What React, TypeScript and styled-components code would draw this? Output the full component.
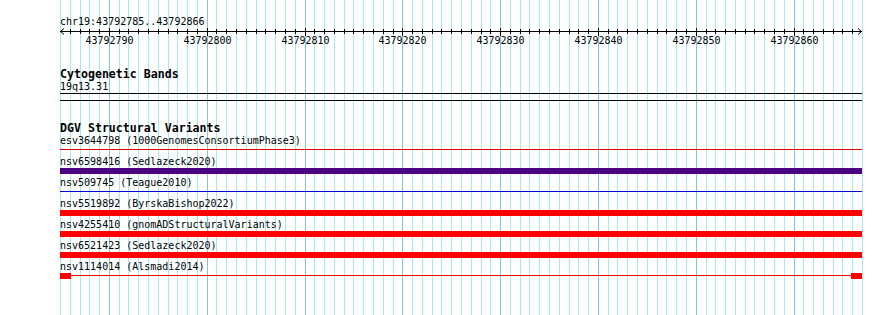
import styled, { createGlobalStyle } from "styled-components";

const START = 43792785;
const END = 43792866;
const LEFT = 60;
const WIDTH = 802;
const BP = END - START + 1;
const xAt = (i: number) => Math.round((i * WIDTH) / BP);
const positions = Array.from({ length: BP + 1 }, (_, i) => ({
  x: xAt(i),
  major: (START + i) % 10 === 0,
  pos: START + i,
}));

type Variant = {
  name: string;
  study: string;
  kind: "line" | "bar" | "ends";
  color: string;
};

const variants: Variant[] = [
  { name: "esv3644798", study: "1000GenomesConsortiumPhase3", kind: "line", color: "#dd0000" },
  { name: "nsv6598416", study: "Sedlazeck2020", kind: "bar", color: "#4b0082" },
  { name: "nsv509745", study: "Teague2010", kind: "line", color: "#0000cd" },
  { name: "nsv5519892", study: "ByrskaBishop2022", kind: "bar", color: "#ff0000" },
  { name: "nsv4255410", study: "gnomADStructuralVariants", kind: "bar", color: "#ff0000" },
  { name: "nsv6521423", study: "Sedlazeck2020", kind: "bar", color: "#ff0000" },
  { name: "nsv1114014", study: "Alsmadi2014", kind: "ends", color: "#ff0000" },
];

const GlobalStyle = createGlobalStyle`
  body {
    margin: 0;
    background: #ffffff;
  }
`;

const Page = styled.div`
  position: relative;
  width: 890px;
  height: 315px;
  overflow: hidden;
  background: #ffffff;
  font-family: "DejaVu Sans Mono", "Liberation Mono", monospace;
  color: #000000;
`;

const GridLayer = styled.svg`
  position: absolute;
  left: ${LEFT}px;
  top: 0;
  z-index: 0;
`;

const Panel = styled.div`
  position: relative;
  z-index: 1;
  display: flex;
  flex-direction: column;
  width: ${WIDTH}px;
  padding: 15px 0 0 ${LEFT}px;
`;

const Small = styled.div`
  font-size: 10px;
  line-height: 13px;
  height: 13px;
  white-space: pre;
`;

const Title = styled.div<{ $gap: number }>`
  margin-top: ${(p) => p.$gap}px;
  font-size: 11.6px;
  font-weight: bold;
  line-height: 12px;
  height: 12px;
  white-space: pre;
`;

const Ruler = styled.svg`
  display: block;
  overflow: visible;
`;

const Band = styled.div`
  height: 6px;
  border-top: 1px solid #000000;
  border-bottom: 1px solid #000000;
`;

const Row = styled.div`
  display: flex;
  flex-direction: column;
  height: 21px;
`;

const Glyph = styled.div`
  display: flex;
  align-items: flex-start;
  height: 6px;
`;

const Bar = styled.div<{ $color: string }>`
  flex: 1;
  height: 6px;
  background: ${(p) => p.$color};
`;

const Line = styled.div<{ $color: string }>`
  flex: 1;
  height: 1px;
  margin-top: 2px;
  background: ${(p) => p.$color};
`;

const EndBox = styled.div<{ $color: string }>`
  width: 11px;
  height: 6px;
  background: ${(p) => p.$color};
`;

const Grid = () => (
  <GridLayer width={WIDTH + 2} height={315} shapeRendering="crispEdges">
    {positions.map((p) => (
      <line
        key={p.pos}
        x1={p.x + 0.5}
        x2={p.x + 0.5}
        y1={0}
        y2={315}
        stroke={p.major ? "#80c6e8" : "#a8e8f0"}
        strokeWidth={1}
      />
    ))}
  </GridLayer>
);

const Scale = () => (
  <Ruler width={WIDTH} height={22} shapeRendering="crispEdges">
    <line x1={0} x2={WIDTH} y1={3.5} y2={3.5} stroke="#000" />
    <polyline points="4,0.5 0.5,3.5 4,6.5" fill="none" stroke="#000" shapeRendering="auto" />
    <polyline points={`${WIDTH - 4},0.5 ${WIDTH - 0.5},3.5 ${WIDTH - 4},6.5`} fill="none" stroke="#000" shapeRendering="auto" />
    {positions.slice(1, -1).map((p) => (
      <line
        key={p.pos}
        x1={p.x + 0.5}
        x2={p.x + 0.5}
        y1={p.major ? 0 : 1}
        y2={p.major ? 8 : 6}
        stroke="#000"
      />
    ))}
    {positions
      .filter((p) => p.major)
      .map((p) => (
        <text
          key={p.pos}
          x={p.x + 0.5}
          y={16}
          textAnchor="middle"
          fontSize={10}
          fontFamily="DejaVu Sans Mono, monospace"
        >
          {p.pos}
        </text>
      ))}
  </Ruler>
);

const VariantRow = ({ v }: { v: Variant }) => (
  <Row>
    <Small>{`${v.name} (${v.study})`}</Small>
    <Glyph>
      {v.kind === "bar" && <Bar $color={v.color} />}
      {v.kind === "line" && <Line $color={v.color} />}
      {v.kind === "ends" && (
        <>
          <EndBox $color={v.color} />
          <Line $color={v.color} />
          <EndBox $color={v.color} />
        </>
      )}
    </Glyph>
  </Row>
);

export default function App() {
  return (
    <>
      <GlobalStyle />
      <Page>
        <Grid />
        <Panel>
          <Small>{`chr19:${START}..${END}`}</Small>
          <Scale />
          <Title $gap={18}>Cytogenetic Bands</Title>
          <Small>19q13.31</Small>
          <Band />
          <Title $gap={21}>DGV Structural Variants</Title>
          {variants.map((v) => (
            <VariantRow key={v.name} v={v} />
          ))}
        </Panel>
      </Page>
    </>
  );
}
